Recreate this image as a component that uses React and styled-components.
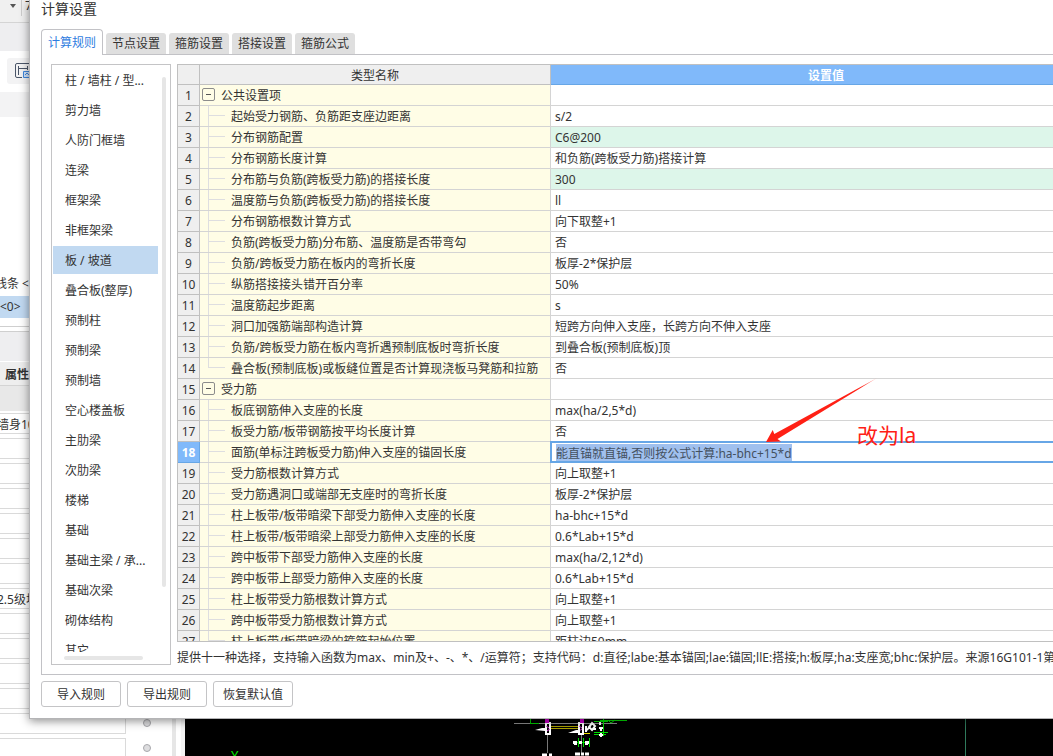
import React, { useEffect, useRef, useState } from 'react';
import styled, { createGlobalStyle, css } from 'styled-components';

const GlobalStyle = createGlobalStyle`
* {
    box-sizing: border-box;
}
body {
    margin: 0;
    font-family: "Noto Sans", "Noto Sans CJK SC", sans-serif;
    font-size: 12px;
    line-height: 20px;
    color: #333333;
    background-color: #ffffff;
}
button, input {
    font: inherit;
    color: inherit;
}
`

/* main window behind the dialog */

const Workspace = styled.div`
    position: relative;
    display: flex;
    height: 100vh;
    overflow: clip;
`

const SidePanel = styled.div`
    flex: none;
    width: 185px;
    display: flex;
    flex-direction: column;
    white-space: nowrap;
    background-color: #ffffff;
`

const TopStrip = styled.div`
    display: flex;
    align-items: center;
    height: 23px;
    padding-bottom: 10px;
    background-color: #f0f0f0;
    border-bottom: 1px solid #d4d4d4;
`

const DropMark = styled.i`
    margin: 0 5px 0 10px;
    border: 3px solid transparent;
    border-top: 4px solid #555555;
    border-bottom: none;
`

const StripText = styled.span`
    padding-left: 3px;
    border-left: 1px solid #cccccc;
`

const Band = styled.div`
    flex: none;
    height: ${p => p.$h}px;
    background-color: ${p => p.$color || '#ffffff'};
    border-top: ${p => p.$line ? '1px solid #cfcfcf' : 'none'};
`

const ToolRow = styled.div`
    height: 41px;
    padding: 7px 0 0 7px;
`

const ToolButton = styled.button`
    display: block;
    width: 60px;
    height: 26px;
    padding: 0 0 0 7px;
    border: none;
    border-radius: 3px;
    background-color: #f3f3f4;
    text-align: left;
    line-height: 0;
`

const TreeItem = styled.div`
    height: ${p => p.$active ? 22 : 24}px;
    line-height: ${p => p.$active ? 22 : 24}px;
    text-indent: ${p => p.$active ? 0 : -5}px;
    background-color: ${p => p.$active ? '#c1d9f1' : '#ffffff'};
`

const PropHead = styled.div`
    height: 25px;
    padding-left: 5px;
    border-top: 1px solid #ffffff;
    border-bottom: 1px solid #d4d4d4;
    background-color: #eeeeee;
    font-weight: bold;
    line-height: 26px;
`

const PropList = styled.div`
    display: flex;
    flex: 1;
    min-height: 0;
    padding-top: 2px;
`

const Fields = styled.div`
    display: flex;
    flex-direction: column;
    gap: 4px;
    width: 126px;
`

const Field = styled.input`
    flex: none;
    width: 100%;
    height: 21px;
    padding: 0;
    border: 1px solid #dadada;
    border-left: none;
    outline: none;
    text-indent: -3px;
`

const Dots = styled.div`
    display: flex;
    flex-direction: column;
    gap: 17px;
    flex: 1;
    align-items: center;
    padding: 6px 4px 0 0;
`

const Dot = styled.i`
    flex: none;
    width: 8px;
    height: 8px;
    border: 1px solid #a8a8ac;
    border-radius: 50%;
    background-color: #dddddf;
`

const Splitter = styled.div`
    width: 13px;
    border-left: 4px solid #e6e6e6;
    border-right: 4px solid #f4f4f4;
`

const CadView = styled.div`
    display: flex;
    flex: 1;
    align-items: flex-end;
    min-width: 0;
    background-color: #000000;
`

const CadDrawing = styled.svg`
    flex: none;
    display: block;
`

/* settings dialog */

const Dialog = styled.div`
    position: absolute;
    top: 0;
    right: -50px;
    bottom: 37px;
    left: 29px;
    display: flex;
    flex-direction: column;
    padding: 0 0 11px 11px;
    border: 1px solid #b4b4b6;
    border-top: none;
    background-color: #ffffff;
    box-shadow: 0 2px 9px rgba(0, 0, 0, 0.45);
`

const Title = styled.h1`
    margin: 0;
    height: 29px;
    font-size: 14px;
    font-weight: normal;
    line-height: 18px;
`

const Tabs = styled.div`
    display: flex;
    flex: none;
    align-items: flex-end;
    gap: 3px;
    height: 26px;
    z-index: 1;
`

const Tab = styled.button`
    width: 60px;
    height: 21px;
    margin-bottom: 1px;
    padding: 1px 0 0;
    border: none;
    border-radius: 3px 3px 0 0;
    background-color: #dfdfdf;
    text-align: center;
    white-space: nowrap;

    ${p => p.$active && css`
        width: 62px;
        height: 26px;
        margin-bottom: 0;
        border: 1px solid #c2c2c6;
        border-bottom: none;
        border-radius: 4px 4px 0 0;
        background-color: #ffffff;
        color: #2f7de0;
    `}
`

const Pane = styled.div`
    display: flex;
    flex: 1;
    gap: 6px;
    min-height: 0;
    margin-top: -1px;
    padding: 9px 0 9px 9px;
    border: 1px solid #c2c2c6;
    border-right: none;
`

const ListBox = styled.nav`
    display: flex;
    flex: none;
    flex-direction: column;
    gap: 4px;
    width: 120px;
    padding: 1px 4px 4px 1px;
    border: 1px solid #c4c4c6;
`

const ListScroll = styled.div`
    display: flex;
    flex: 1;
    gap: 4px;
    min-height: 0;
`

const List = styled.ul`
    display: flex;
    flex: 1;
    flex-direction: column;
    gap: 2px;
    min-width: 0;
    margin: 0;
    padding: 0;
    overflow: hidden;
    list-style: none;
`

const ListItem = styled.button`
    display: block;
    width: 100%;
    height: 28px;
    padding: 2px 0 0 12px;
    border: none;
    background-color: ${p => p.$active ? '#c1d9f1' : 'transparent'};
    text-align: left;
    white-space: nowrap;
`

const ThumbV = styled.i`
    width: 4px;
    height: 87%;
    margin-top: 11px;
    border-radius: 2px;
    background-color: #e6e6e6;
`

const ThumbH = styled.i`
    flex: none;
    width: 79px;
    height: 4px;
    margin-left: 11px;
    border-radius: 2px;
    background-color: #e6e6e6;
`

const Content = styled.div`
    display: flex;
    flex: 1;
    flex-direction: column;
    min-width: 0;
`

const GridWrap = styled.div`
    flex: 1;
    min-height: 0;
    overflow: hidden;
    border: 1px solid #c0c0c0;
    border-right: none;
`

const Grid = styled.table`
    width: 100%;
    border-spacing: 0;
    table-layout: fixed;
`

const cell = css`
    height: 21px;
    padding: 2px 0 0;
    border-right: 1px solid #d4d4d4;
    border-bottom: 1px solid #d4d4d4;
    font-weight: normal;
    line-height: 18px;
    white-space: nowrap;
    overflow: hidden;
`

const blueHead = css`
    border-color: #67a6e6;
    background-color: #80b9fa;
    color: #ffffff;
    font-weight: bold;
`

const HeadCell = styled.th`
    ${cell}
    height: 20px;
    border-color: #c0c0c0;
    background-color: #efefef;
    line-height: 17px;
    ${p => p.$active && blueHead}
`

const NumCell = styled.th`
    ${cell}
    border-color: #c0c0c0;
    background-color: #efefef;
    ${p => p.$active && blueHead}
`

const NameCell = styled.td`
    ${cell}
    padding: 0;
    background-color: #fffde6;
`

const NameInner = styled.div`
    display: flex;
    align-items: center;
    height: 20px;
`

const NameText = styled.span`
    padding-top: 2px;
`

const Branch = styled.i`
    flex: none;
    width: 17px;
    height: 20px;
    margin: 0 6px 0 8px;
    background-image: linear-gradient(#dedee0, #dedee0), linear-gradient(#dedee0, #dedee0);
    background-repeat: no-repeat;
    background-position: 0 9px, 0 0;
    background-size: 17px 1px, 1px ${p => p.$last ? '10px' : '20px'};
`

const Toggle = styled.button`
    flex: none;
    display: flex;
    align-items: center;
    justify-content: center;
    width: 13px;
    height: 13px;
    margin: 0 6px 2px 2px;
    padding: 0;
    border: 1px solid #8c8c8c;
    border-radius: 2px;
    background-color: transparent;

    &::before {
        content: '';
        width: 5px;
        height: 1px;
        background-color: #555555;
    }
`

const ValueCell = styled.td`
    ${cell}
    padding-left: 4px;
    border-right: none;
    background-color: ${p => p.$green ? '#ddf6ea' : '#ffffff'};

    ${p => p.$editing && css`
        padding: 0;
        border-bottom: none;
        overflow: visible;
    `}
`

const ValueInput = styled.input`
    display: block;
    width: calc(100% + 1px);
    height: 22px;
    margin: -1px 0 0 -1px;
    padding: 1px 0 0 4px;
    border: 2px solid #67a6e6;
    border-radius: 0;
    outline: none;
    background-color: #ffffff;

    &::selection {
        background-color: #a0c0ee;
        color: #44505f;
    }
`

const Hint = styled.p`
    flex: none;
    height: 23px;
    margin: 0;
    padding-top: 6px;
    overflow: hidden;
    line-height: 19px;
    white-space: nowrap;
`

const Footer = styled.div`
    display: flex;
    flex: none;
    gap: 6px;
    padding-top: 6px;
`

const FootButton = styled.button`
    width: 80px;
    height: 26px;
    padding: 2px 0 0;
    border: 1px solid #c4c4c6;
    border-radius: 3px;
    background-color: #ffffff;
`

/* red mark over the grid */

const Arrow = styled.svg`
    position: absolute;
    top: 377px;
    left: 736px;
    pointer-events: none;
`

const Note = styled.span`
    position: absolute;
    top: 421px;
    left: 827px;
    color: #ff2015;
    font-size: 21px;
    line-height: 28px;
`

const tabs = ['计算规则', '节点设置', '箍筋设置', '搭接设置', '箍筋公式']

const parts = [
    '柱 / 墙柱 / 型...', '剪力墙', '人防门框墙', '连梁', '框架梁', '非框架梁', '板 / 坡道',
    '叠合板(整厚)', '预制柱', '预制梁', '预制墙', '空心楼盖板', '主肋梁', '次肋梁', '楼梯',
    '基础', '基础主梁 / 承...', '基础次梁', '砌体结构', '其它',
]

const rows = [
    { group: true, name: '公共设置项', value: '' },
    { name: '起始受力钢筋、负筋距支座边距离', value: 's/2' },
    { name: '分布钢筋配置', value: 'C6@200', green: true },
    { name: '分布钢筋长度计算', value: '和负筋(跨板受力筋)搭接计算' },
    { name: '分布筋与负筋(跨板受力筋)的搭接长度', value: '300', green: true },
    { name: '温度筋与负筋(跨板受力筋)的搭接长度', value: 'll' },
    { name: '分布钢筋根数计算方式', value: '向下取整+1' },
    { name: '负筋(跨板受力筋)分布筋、温度筋是否带弯勾', value: '否' },
    { name: '负筋/跨板受力筋在板内的弯折长度', value: '板厚-2*保护层' },
    { name: '纵筋搭接接头错开百分率', value: '50%' },
    { name: '温度筋起步距离', value: 's' },
    { name: '洞口加强筋端部构造计算', value: '短跨方向伸入支座，长跨方向不伸入支座' },
    { name: '负筋/跨板受力筋在板内弯折遇预制底板时弯折长度', value: '到叠合板(预制底板)顶' },
    { name: '叠合板(预制底板)或板缝位置是否计算现浇板马凳筋和拉筋', value: '否', last: true },
    { group: true, name: '受力筋', value: '' },
    { name: '板底钢筋伸入支座的长度', value: 'max(ha/2,5*d)' },
    { name: '板受力筋/板带钢筋按平均长度计算', value: '否' },
    { name: '面筋(单标注跨板受力筋)伸入支座的锚固长度', value: '能直锚就直锚,否则按公式计算:ha-bhc+15*d', editing: true },
    { name: '受力筋根数计算方式', value: '向上取整+1' },
    { name: '受力筋遇洞口或端部无支座时的弯折长度', value: '板厚-2*保护层' },
    { name: '柱上板带/板带暗梁下部受力筋伸入支座的长度', value: 'ha-bhc+15*d' },
    { name: '柱上板带/板带暗梁上部受力筋伸入支座的长度', value: '0.6*Lab+15*d' },
    { name: '跨中板带下部受力筋伸入支座的长度', value: 'max(ha/2,12*d)' },
    { name: '跨中板带上部受力筋伸入支座的长度', value: '0.6*Lab+15*d' },
    { name: '柱上板带受力筋根数计算方式', value: '向上取整+1' },
    { name: '跨中板带受力筋根数计算方式', value: '向上取整+1' },
    { name: '柱上板带/板带暗梁的箍筋起始位置', value: '距柱边50mm' },
]

const fields = ['墙身10', '', '', '', '', '', '', '2.5级块', '', '', '', '', '', '']

const Cad = () => (
    <CadDrawing width="800" height="38" viewBox="185 718 800 38" fill="none">
        <text x="231" y="760" fill="#00e800" fontSize="13">Y</text>
        <path d="M965.5 718v38" stroke="#2f7a5c" />
        <path d="M514 723.5h103" stroke="#8a8a8a" />
        <path d="M547.5 735v18M581.5 735v18" stroke="#777777" />
        <path d="M550 726.5h30M550 728.5h30" stroke="#a8a000" />
        <path d="M530.5 718v6M530 723.5h9" stroke="#00c800" />
        <path d="M603.5 718v18M594 721.5h14M594 732.5h14M594 734.5h12M600 720.5h27M608 720l3 3 4-3" stroke="#00dd00" />
        <path d="M575 742.5h14M578.5 738v9M583.5 738v9M589.5 738v9" stroke="#00dd00" />
        <path d="M546 723h4v11h-4zM579 723h4v11h-4z" stroke="#ffffff" strokeWidth="2" />
        <path d="M545 718h4v5h-4zM580 718h4v5h-4z" fill="#c800c8" />
        <path d="M546 726l3 2M550 729l-3 2M579 726l3 2M579 731l3-2" stroke="#d040d0" />
        <path d="M535 730l7-2h3v3zM568 733l8-3h4v3z" fill="#ffffff" />
        <path d="M587 730l4-5M592 723l3 3-3 4-3-3zM586 726v6M593 729h3" stroke="#ffffff" strokeWidth="2" />
        <path d="M600 722v3M601 727v4M601 733v4M599 728h4M599 735h4" stroke="#ffffff" strokeWidth="2" />
        <path d="M584 733.5h6" stroke="#e8d800" />
        <path d="M573 742.5h4M579 742.5h3M585 742.5h4M575.5 741v4M586.5 741v4" stroke="#ffffff" strokeWidth="3" />
        <path d="M542 755h5M549 755h3M575 754h5M581 754h3M585 754h4" stroke="#ffffff" strokeWidth="3" />
    </CadDrawing>
)

const App = () => {
    const inputRef = useRef(null)
    const [part, setPart] = useState('板 / 坡道')
    const [tab, setTab] = useState('计算规则')

    useEffect(() => {
        inputRef.current.focus({ preventScroll: true })
        inputRef.current.select()
    }, [])

    return (
        <Workspace>
            <GlobalStyle />
            <SidePanel>
                <TopStrip>
                    <DropMark />
                    <StripText>7</StripText>
                </TopStrip>
                <Band $h={28} $color="#eeeef0" />
                <ToolRow>
                    <ToolButton aria-label="构件">
                        <svg width="18" height="18" viewBox="0 0 18 18" fill="none" stroke="#4a5568">
                            <path d="M16 1.500H3Q1.500 1.500 1.500 3V14Q1.500 15.500 3 15.500H8" />
                            <path d="M4.500 4v9M4.500 6.500H13M13.500 4v4" />
                            <path d="M9.500 9.500h7v6h-7zM11 13l2-2 2 2" stroke="#3f86dc" fill="#cfe2fa" />
                        </svg>
                    </ToolButton>
                </ToolRow>
                <Band $h={25} $color="#f3f3f4" />
                <Band $h={155} />
                <TreeItem>线条 &lt;</TreeItem>
                <TreeItem $active>&lt;0&gt;</TreeItem>
                <Band $h={8} />
                <Band $h={5} $line />
                <Band $h={30} $color="#eeeef0" $line />
                <PropHead>属性</PropHead>
                <Band $h={25} $color="#e8e8e8" />
                <PropList>
                    <Fields>
                        {fields.map((v, i) => <Field key={i} aria-label={'属性值' + (i + 1)} defaultValue={v} />)}
                    </Fields>
                    <Dots>
                        {fields.map((v, i) => <Dot key={i} />)}
                    </Dots>
                    <Splitter />
                </PropList>
            </SidePanel>
            <CadView>
                <Cad />
            </CadView>

            <Dialog role="dialog" aria-label="计算设置">
                <Title>计算设置</Title>
                <Tabs role="tablist">
                    {tabs.map(t => (
                        <Tab key={t} role="tab" aria-selected={t === tab} $active={t === tab} onClick={() => setTab(t)}>{t}</Tab>
                    ))}
                </Tabs>
                <Pane>
                    <ListBox>
                        <ListScroll>
                            <List>
                                {parts.map(p => (
                                    <li key={p}>
                                        <ListItem $active={p === part} onClick={() => setPart(p)}>{p}</ListItem>
                                    </li>
                                ))}
                            </List>
                            <ThumbV />
                        </ListScroll>
                        <ThumbH />
                    </ListBox>
                    <Content>
                        <GridWrap>
                            <Grid>
                                <colgroup>
                                    <col width="22" />
                                    <col width="351" />
                                    <col />
                                </colgroup>
                                <thead>
                                    <tr>
                                        <HeadCell />
                                        <HeadCell>类型名称</HeadCell>
                                        <HeadCell $active>设置值</HeadCell>
                                    </tr>
                                </thead>
                                <tbody>
                                    {rows.map((r, i) => (
                                        <tr key={i}>
                                            <NumCell $active={r.editing}>{i + 1}</NumCell>
                                            <NameCell>
                                                <NameInner>
                                                    {r.group ? <Toggle aria-label="收起" /> : <Branch $last={r.last} />}
                                                    <NameText>{r.name}</NameText>
                                                </NameInner>
                                            </NameCell>
                                            <ValueCell $green={r.green} $editing={r.editing}>
                                                {r.editing
                                                    ? <ValueInput ref={inputRef} aria-label={r.name} defaultValue={r.value} />
                                                    : r.value}
                                            </ValueCell>
                                        </tr>
                                    ))}
                                </tbody>
                            </Grid>
                        </GridWrap>
                        <Hint>提供十一种选择，支持输入函数为max、min及+、-、*、/运算符；支持代码：d:直径;labe:基本锚固;lae:锚固;llE:搭接;h:板厚;ha:支座宽;bhc:保护层。来源16G101-1第99页</Hint>
                    </Content>
                </Pane>
                <Footer>
                    <FootButton>导入规则</FootButton>
                    <FootButton>导出规则</FootButton>
                    <FootButton>恢复默认值</FootButton>
                </Footer>

                <Arrow width="112" height="66" viewBox="766 377 112 66">
                    <defs>
                        <linearGradient id="fade" x1="0" x2="1" y1="0" y2="0">
                            <stop offset="0.85" stopColor="#ff2015" />
                            <stop offset="1" stopColor="#ff2015" stopOpacity="0.4" />
                        </linearGradient>
                    </defs>
                    <path d="M766 442L772.700 430L774.300 434L877 378L777.500 439L781 441.500Z" fill="url(#fade)" />
                </Arrow>
                <Note>改为la</Note>
            </Dialog>
        </Workspace>
    );
}

export default App;
